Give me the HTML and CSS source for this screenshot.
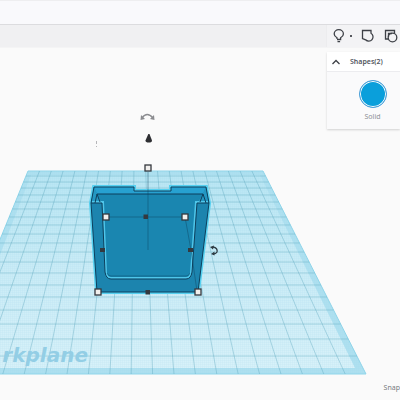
FILE: index.html
```
<!DOCTYPE html>
<html lang="en">
<head>
    <meta charset="UTF-8">
    <meta name="viewport" content="width=device-width, initial-scale=1.0">
    <title>3D Editor</title>
    <link rel="stylesheet" href="styles.css">
</head>
<body>

<div class="app">
    <header class="top-bar"></header>

    <!-- Toolbar -->
    <div class="toolbar">
        <div class="tools">
            <button class="tool tool-light" aria-label="Visibility">
                <svg width="12" height="14" viewBox="0 0 12 14">
                    <path d="M4 10V8.800Q1.200 7.200 1.200 5A4.600 4.300 0 0 1 10.400 5Q10.400 7.200 7.600 8.800V10.500H4M4.500 12.700H7.100"/>
                </svg>
                <span class="caret"></span>
            </button>
            <button class="tool" aria-label="Group">
                <svg width="14" height="14" viewBox="0 0 14 14">
                    <path d="M1.500 1.500H10V4.200A4.300 4.300 0 1 1 4.600 10.800L1.500 9.500Z"/>
                </svg>
            </button>
            <button class="tool" aria-label="Ungroup">
                <svg width="14" height="14" viewBox="0 0 14 14">
                    <path d="M4 10H1.500V1.500H10.500V4"/>
                    <circle cx="8.500" cy="8.500" r="4.300"/>
                    <path d="M4.500 8V4.500H8"/>
                </svg>
            </button>
        </div>
    </div>

    <main class="workspace">
        <svg class="scene" viewBox="0 48 400 352" preserveAspectRatio="xMinYMin meet">
            <defs>
                <linearGradient id="plane" x1="0" y1="0" x2="0" y2="1">
                    <stop offset="0" stop-color="#b9e6f4"/>
                    <stop offset="0.4" stop-color="#c8ebf6"/>
                    <stop offset="1" stop-color="#d8f1f9"/>
                </linearGradient>
                <pattern id="fine" width="2" height="2" patternUnits="userSpaceOnUse">
                    <path d="M0 .5H2M.5 0V2" stroke="#9fd3e6" stroke-width=".5" opacity=".25"/>
                </pattern>
            </defs>

            <!-- Workplane -->
            <path d="M28 171H263L366 374H-55Z" fill="#aee0f0"/>
            <path d="M31 175H260L355 368H-44Z" fill="url(#plane)"/>
            <path d="M28 171H263L366 374H-55Z" fill="url(#fine)"/>
            <path class="edge" d="M-55 374L28 171H263L366 374Z"/>
            <g id="grid" class="grid"></g>
            <text class="plane-name" x="88" y="362" text-anchor="end">rkplane</text>

            <!-- Box -->
            <path class="glow" d="M94 187H134V191H171V187H206L209 203L198 292H97L91 203Z"/>
            <path fill="#1c84ae" d="M94 187H134V191H171V187H206L209 203L198 292H97L91 203Z"/>
            <path fill="#27a1d1" d="M94 187H134V191H171V187H206L203 194H97Z"/>
            <path fill="#2497c2" d="M94 187L97 194L102 203H91ZM206 187L203 194L197 203H209Z"/>
            <path fill="#1a86b0" d="M97 194H203L197 203L191 271Q190 277 186 277H110Q107 277 106 271L102 203Z"/>
            <path class="inner-glow" d="M92 202H103L106 273Q107 278 111 278H186Q190 278 191 273L196 202H208"/>
            <path class="lines" d="M94 187H134V191H171V187H206L209 203L198 292H97L91 203ZM97 194H203M97 194L95 203M203 194L206 203M97 194L100 202M203 194L200 202M91 203H102L105 272Q106 279 111 279H186Q191 279 192 272L197 203H209"/>
            <path class="lines thin" d="M108 217H185L191 250L197 291M148 172V250M107 273Q108 276 111 276H186Q189 276 190 273"/>

            <!-- Handles -->
            <g class="handle">
                <rect x="145" y="165" width="6" height="6"/>
                <rect x="103" y="214" width="6" height="6"/>
                <rect x="182" y="214" width="6" height="6"/>
                <rect x="95" y="289" width="6" height="6"/>
                <rect x="195" y="289" width="6" height="6"/>
            </g>
            <g fill="#34393f">
                <rect x="143.500" y="214.500" width="4.500" height="4.500"/>
                <rect x="100" y="248" width="5" height="4"/>
                <rect x="188" y="248" width="5" height="4"/>
                <rect x="145.500" y="290" width="4.500" height="4.500"/>
            </g>

            <!-- Lift cone and rotation arrows -->
            <path fill="#2d2e32" d="M148.300 134H149.500L152 140.500Q152 142.500 148.800 142.500Q145.500 142.500 145.500 140.500Z"/>
            <path class="arrow soft" d="M142 118Q147 111 153 118"/>
            <path fill="#8b8c90" d="M141 115L145 119L140.500 120ZM154 115L150 119L154.500 120Z"/>
            <path class="arrow" d="M213 247Q218 248 217 252Q216 254 213 254"/>
            <path fill="#2d3a42" d="M210 247L214 245.500L213 249.500ZM211 254L214.500 251.500V255.500Z"/>
            <path stroke="#a5a5a8" stroke-width=".8" d="M96.500 141V144M96 146.500H97"/>
        </svg>

        <!-- Shape inspector -->
        <section class="inspector">
            <button class="inspector-head" aria-expanded="true">
                <svg width="10" height="6" viewBox="0 0 10 6"><path d="M1.500 5L5 1.500L8.500 5"/></svg>
                <span>Shapes(2)</span>
            </button>
            <div class="inspector-body">
                <button class="swatch" id="solid" aria-labelledby="solid-label"></button>
                <span class="swatch-label" id="solid-label">Solid</span>
            </div>
        </section>

        <div class="snap">Snap</div>
    </main>
</div>

<script>
    const grid = document.getElementById('grid');
    const rows = [176, 182, 188, 195, 202, 209, 217, 225, 234, 243, 252, 262, 273, 285, 297, 310, 324, 339, 356];
    let d = '';

    // rows run between the two slanted sides
    rows.forEach((y) => {
        const t = (y - 171) / 203;
        d += `M${28 - 83 * t} ${y}H${263 + 103 * t}`;
    });

    // columns spread towards the viewer
    for (let i = 0; i < 19; i++) {
        d += `M${39.5 + 11.8 * i} 171L${-40 + 21.4 * i} 374`;
    }

    const path = document.createElementNS('http://www.w3.org/2000/svg', 'path');
    path.setAttribute('d', d);
    grid.appendChild(path);
</script>

</body>
</html>
```
FILE: styles.css
```
* {
    box-sizing: border-box;
}

body {
    margin: 0;
    background: #fafafa;
    font-family: "Noto Sans", sans-serif;
    color: #51555e;
}

button {
    border: none;
    background: none;
    padding: 0;
    font: inherit;
    color: inherit;
    cursor: pointer;
}

.app {
    display: flex;
    flex-direction: column;
    min-height: 100vh;
}

/* Bars */
.top-bar {
    height: 25px;
    background: #f9f9fc;
    border-top: 1px solid #eeeef0;
    border-bottom: 1px solid #dcdcdf;
}

.toolbar {
    display: flex;
    justify-content: flex-end;
    height: 23px;
    background: #f0f0f2;
    border-bottom: 1px solid #f4f4f5;
}

.tools {
    display: flex;
    align-items: center;
    gap: 9px;
    width: 74px;
    padding-left: 6px;
    overflow: hidden;
    background: #f3f3f5;
    border-left: 1px solid #ececee;
}

.tool {
    display: flex;
    flex-shrink: 0;
    align-items: center;
}

.tool svg {
    fill: none;
    stroke: #3e4147;
    stroke-width: 1.3;
}

.tool-light {
    gap: 5px;
}

.caret {
    width: 2px;
    height: 2px;
    background: #55585e;
}

/* Canvas */
.workspace {
    position: relative;
    flex: 1;
}

.scene {
    display: block;
    width: 100%;
}

.edge {
    fill: none;
    stroke: #8fd5ea;
    stroke-width: 1;
}

.grid {
    fill: none;
    stroke: #5aa5bd;
    stroke-width: 0.6;
    opacity: 0.65;
}

.plane-name {
    font: italic bold 20px "DejaVu Sans", sans-serif;
    fill: #93cee5;
}

.glow {
    fill: none;
    stroke: #55d0f0;
    stroke-width: 4;
}

.inner-glow {
    fill: none;
    stroke: #4fc6ea;
    stroke-width: 2;
}

.lines {
    fill: none;
    stroke: #0d3f5c;
    stroke-width: 1;
}

.thin {
    stroke-width: 0.6;
    opacity: 0.7;
}

.handle {
    fill: #f1efed;
    stroke: #34373d;
    stroke-width: 1.3;
}

.arrow {
    fill: none;
    stroke: #2d3a42;
    stroke-width: 1.3;
}

.soft {
    stroke: #8b8c90;
}

/* Shape inspector */
.inspector {
    position: absolute;
    top: 4px;
    right: 0;
    width: 73px;
    background: #fafafb;
    box-shadow: 0 1px 2px rgba(0, 0, 0, 0.16);
}

.inspector-head {
    display: flex;
    align-items: center;
    gap: 9px;
    width: 100%;
    height: 20px;
    padding-left: 4px;
    background: #fff;
    border-bottom: 1px solid #ececef;
    font-size: 7px;
    font-weight: 600;
}

.inspector-head svg {
    fill: none;
    stroke: #3e4147;
    stroke-width: 1.3;
}

.inspector-body {
    display: flex;
    flex-direction: column;
    align-items: center;
    padding: 8px 0 7px 18px;
}

.swatch {
    width: 28px;
    height: 28px;
    border: 1px solid #4f9fd8;
    border-radius: 50%;
    background: #0a9fdb;
    box-shadow: inset 0 0 0 1px #fff;
}

.swatch-label {
    margin-top: 4px;
    font-size: 7px;
    line-height: 10px;
    color: #8d9097;
}

.snap {
    position: absolute;
    right: 0;
    bottom: 7px;
    font-size: 7px;
    line-height: 10px;
    color: #777a80;
}
```
